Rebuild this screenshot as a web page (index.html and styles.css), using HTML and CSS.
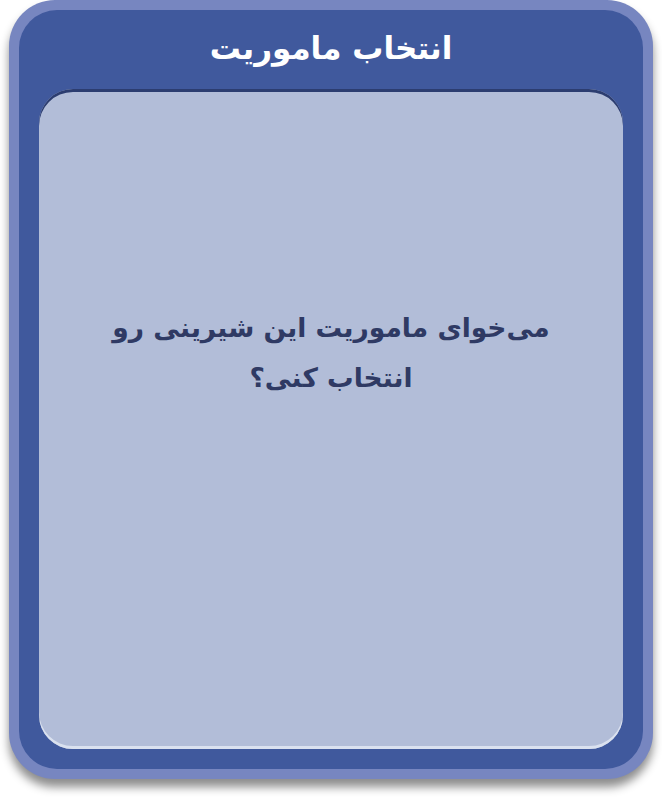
FILE: index.html
```html
<!DOCTYPE html>
<html lang="fa" dir="rtl">
<head>
<meta charset="utf-8">
<link rel="stylesheet" href="styles.css">
</head>
<body>
<div class="frame">
  <div class="inner">
    <h1 class="title">انتخاب ماموریت</h1>
    <div class="panel">
      <p class="message">می‌خوای ماموریت این شیرینی رو<br>انتخاب کنی؟</p>
    </div>
  </div>
</div>
</body>
</html>
```
FILE: styles.css
```css
html, body {
  margin: 0;
  padding: 0;
  background: #ffffff;
}
body {
  width: 662px;
  height: 799px;
  font-family: "DejaVu Sans", "Noto Sans", sans-serif;
}
.frame {
  box-sizing: border-box;
  margin: 0 auto;
  width: 644px;
  height: 779px;
  border-radius: 46px;
  background: #7786c0;
  padding: 10px;
  box-shadow: 0 8px 10px rgba(0, 0, 0, 0.45);
}
.inner {
  box-sizing: border-box;
  height: 100%;
  border-radius: 38px;
  background: #40599d;
  padding: 0 20px 20px;
  display: flex;
  flex-direction: column;
}
.title {
  margin: 0;
  height: 79px;
  display: flex;
  align-items: center;
  justify-content: center;
  color: #ffffff;
  font-size: 31px;
  font-weight: bold;
  padding-bottom: 4px;
  box-sizing: border-box;
}
.panel {
  flex: 1;
  border-radius: 34px;
  background: #b2bdd8;
  box-shadow: inset 0 3px 0 #2c3d70, inset 0 -3px 0 #dae1ef;
  display: flex;
  justify-content: center;
}
.message {
  margin: 0;
  padding-top: 214px;
  text-align: center;
  color: #2f3a64;
  font-size: 26.5px;
  font-weight: bold;
  line-height: 50px;
}
```
